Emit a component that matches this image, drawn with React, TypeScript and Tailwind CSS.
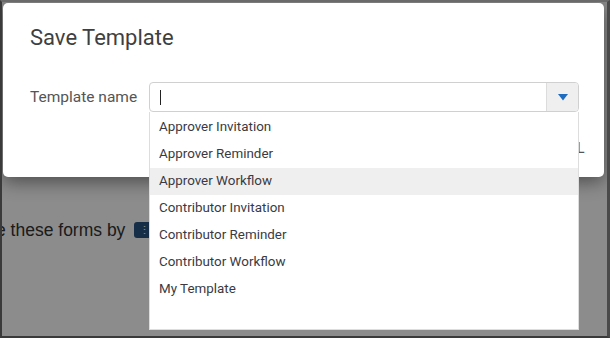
import React from "react";

const items = [
  "Approver Invitation",
  "Approver Reminder",
  "Approver Workflow",
  "Contributor Invitation",
  "Contributor Reminder",
  "Contributor Workflow",
  "My Template",
];

export default function App() {
  return (
    <div className="w-[610px] h-[338px] overflow-hidden border-l-2 border-t-2 border-b-2 border-r-[3px] border-l-[#3a3a3a] border-t-[#6a6a6a] border-r-[#4a4a4a] border-b-[#3a3a3a] bg-white relative font-['Roboto',sans-serif]">
      {/* background page */}
      <div className="flex flex-col h-full pt-[217px]">
        <div className="flex items-center gap-[9px] -ml-[6px] h-[22px]">
          <span className="text-[17.5px] text-[#333] font-['Liberation_Sans',sans-serif] leading-[22px]">e these forms by</span>
          <span className="flex items-center gap-[3px] h-[16px] px-[5px] rounded-[3px] bg-[#2b5483] text-white text-[11px] leading-none">
            <span>⋮</span>
            <span>Actions</span>
          </span>
        </div>
      </div>

      {/* overlay */}
      <div className="absolute inset-0 bg-[rgba(0,0,0,0.45)] pl-[1px] pt-[1px]">
        <div className="relative w-[601px] h-[174px] bg-white rounded-[5px] shadow-[0_5px_18px_rgba(0,0,0,0.45)] flex flex-col pl-[27px] pr-[19px] pt-[21px]">
          <div className="text-[22px] leading-[28px] text-[#3f3f3f]">Save Template</div>
          <div className="flex items-center mt-[30px]">
            <div className="w-[119px] text-[15.5px] text-[#555] leading-[20px]">Template name</div>
            <div className="relative w-[430px] h-[30px] border border-[#d0d0d0] rounded-[4px] flex items-stretch">
              <div className="flex-1 flex items-center pl-[10px]">
                <div className="w-[1px] h-[15px] bg-[#222]" />
              </div>
              <div className="w-[32px] bg-[#efefef] border-l border-[#dcdcdc] rounded-r-[3px] flex items-center justify-center">
                <svg width="10" height="7" viewBox="0 0 10 7">
                  <polygon points="0,0 10,0 5,6.5" fill="#1d6cbf" />
                </svg>
              </div>
              {/* dropdown menu */}
              <div className="absolute left-[-1px] top-[29px] w-[430px] h-[218px] bg-white border border-t-0 border-[#dddddd] z-10 flex flex-col pt-[2px]">
                {items.map((t, i) => (
                  <div
                    key={t}
                    className={`h-[27px] shrink-0 flex items-center pl-[9px] text-[13.4px] text-[#3a3a44] ${i === 2 ? "bg-[#efefef]" : ""}`}
                  >
                    {t}
                  </div>
                ))}
              </div>
            </div>
          </div>
          <div className="flex justify-end mt-[26px]">
            <span className="text-[14px] leading-[20px] text-[#555] tracking-[0.5px]">CANCEL</span>
          </div>
        </div>
      </div>
    </div>
  );
}
